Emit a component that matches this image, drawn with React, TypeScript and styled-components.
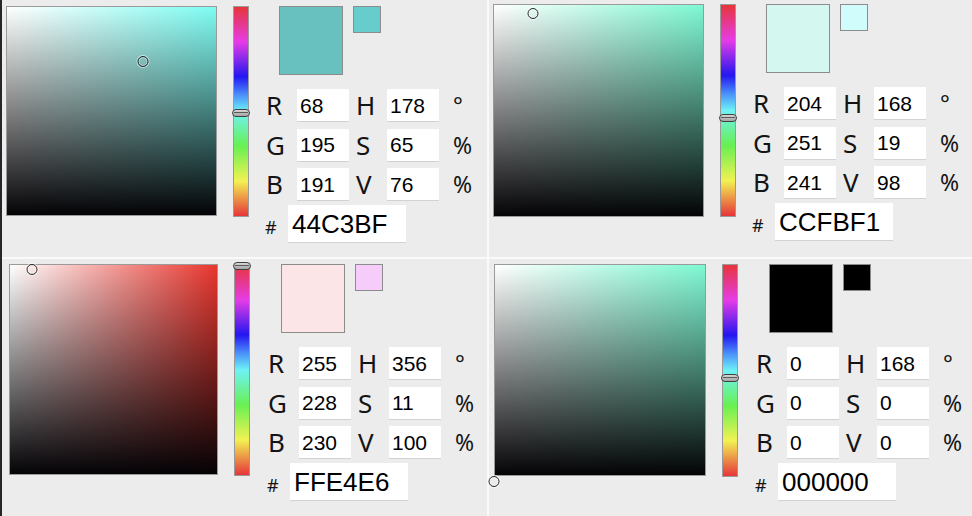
import React from "react";
import styled, { createGlobalStyle } from "styled-components";

const Global = createGlobalStyle`
  html, body { margin: 0; padding: 0; background: #ececec; }
  body { width: 972px; height: 516px; overflow: hidden; }
  * { box-sizing: border-box; }
`;

const Page = styled.div`
  display: grid;
  grid-template-columns: 485px 483px;
  grid-template-rows: 257px 257px;
  gap: 2px;
  width: 972px;
  height: 516px;
  background: #fafafa;
  border-left: 2px solid #262626;
`;

const Panel = styled.div<{ $pt: number; $pl: number }>`
  display: flex;
  align-items: flex-start;
  background: #ececec;
  padding: ${(p) => p.$pt}px 0 0 ${(p) => p.$pl}px;
  font-family: "Noto Sans", "DejaVu Sans", sans-serif;
  color: #1c1c1c;
`;

const Square = styled.div<{ $w: number; $h: number; $pure: string }>`
  position: relative;
  flex: none;
  width: ${(p) => p.$w}px;
  height: ${(p) => p.$h}px;
  border: 1px solid #9a9a9a;
  background: linear-gradient(to bottom, rgba(0, 0, 0, 0) 0%, #040306 100%),
    linear-gradient(to right, #ffffff 0%, ${(p) => p.$pure} 100%);
  margin-right: 16px;
`;

const Marker = styled.div`
  position: absolute;
  width: 11px;
  height: 11px;
  border-radius: 50%;
  border: 1.5px solid #26282a;
  box-shadow: 0 0 0 1px rgba(255, 255, 255, 0.6), inset 0 0 0 1px rgba(255, 255, 255, 0.4);
  transform: translateX(-50%);
`;

const HueBar = styled.div<{ $h: number }>`
  position: relative;
  flex: none;
  width: 16px;
  height: ${(p) => p.$h}px;
  border: 1px solid #9a9a9a;
  background: linear-gradient(
    to bottom,
    #e6353a 0%,
    #e63ce6 16.7%,
    #2416f0 33.3%,
    #4a90fa 42%,
    #6ef2f6 50%,
    #68f052 66.7%,
    #f2f252 83.3%,
    #e6353a 100%
  );
`;

const HueHandle = styled.div`
  position: absolute;
  left: -2px;
  width: 18px;
  height: 8px;
  border-radius: 4px;
  border: 1px solid #404040;
  background: linear-gradient(to bottom, #d6d6d6, #a4a4a4);
  transform: translateY(-50%);
  &::after {
    content: "";
    position: absolute;
    left: 1px;
    right: 1px;
    top: 2px;
    height: 1px;
    background: #5a5a5a;
  }
`;

const RightCol = styled.div<{ $ml: number }>`
  display: flex;
  flex-direction: column;
  margin-left: ${(p) => p.$ml}px;
`;

const Swatches = styled.div`
  display: flex;
  align-items: flex-start;
  gap: 10px;
  padding-left: 14px;
  margin-bottom: 14px;
`;

const Swatch = styled.div<{ $c: string; $w: number; $h: number }>`
  width: ${(p) => p.$w}px;
  height: ${(p) => p.$h}px;
  background: ${(p) => p.$c};
  border: 1px solid #8c8c8c;
`;

const Fields = styled.div`
  display: flex;
  flex-direction: column;
  gap: 6.5px;
`;

const Row = styled.div`
  display: flex;
  align-items: flex-start;
  height: 33px;
`;

const Label = styled.span<{ $w: number; $pl?: number }>`
  width: ${(p) => p.$w}px;
  padding-left: ${(p) => p.$pl ?? 1}px;
  font-size: 26px;
  line-height: 33px;
  color: #141414;
`;

const Unit = styled.span`
  padding-left: 14px;
  font-size: 23px;
  line-height: 33px;
  color: #141414;
`;

const NumInput = styled.input`
  width: 52px;
  height: 33px;
  border: none;
  border-bottom: 1px solid #d2d2d2;
  background: #ffffff;
  padding: 1px 0 0 3px;
  margin: 0;
  outline: none;
  font-family: "Liberation Sans", Arial, sans-serif;
  font-size: 21px;
  color: #000;
`;

const HexRow = styled.div`
  display: flex;
  align-items: flex-start;
  margin-top: -2.5px;
`;

const Hash = styled.span`
  width: 23px;
  padding-top: 3px;
  font-size: 18px;
  line-height: 38px;
  color: #141414;
`;

const HexInput = styled.input`
  width: 118px;
  height: 38px;
  border: none;
  border-bottom: 1px solid #d2d2d2;
  background: #ffffff;
  padding: 1px 0 0 4px;
  margin: 0;
  outline: none;
  font-family: "Liberation Sans", Arial, sans-serif;
  font-size: 26px;
  color: #000;
`;

type Cfg = {
  pad: [number, number];
  sq: [number, number];
  hueH: number;
  gapR: number;
  hue: number;
  s: number;
  v: number;
  rgb: [number, number, number];
  hex: string;
  pure: string;
  big: string;
  small: string;
};

const panels: Cfg[] = [
  { pad: [6, 4], sq: [211, 210], hueH: 211, gapR: 16, hue: 178, s: 65, v: 76, rgb: [68, 195, 191], hex: "44C3BF", pure: "#7efcf2", big: "#69c1bf", small: "#66cccc" },
  { pad: [4, 4], sq: [211, 213], hueH: 213, gapR: 16, hue: 168, s: 19, v: 98, rgb: [204, 251, 241], hex: "CCFBF1", pure: "#7ef8d2", big: "#d4f8ef", small: "#d0fcfc" },
  { pad: [5, 7], sq: [209, 211], hueH: 212, gapR: 17, hue: 356, s: 11, v: 100, rgb: [255, 228, 230], hex: "FFE4E6", pure: "#e8362e", big: "#fbe5e6", small: "#f6ccfa" },
  { pad: [5, 5], sq: [212, 212], hueH: 213, gapR: 17, hue: 168, s: 0, v: 0, rgb: [0, 0, 0], hex: "000000", pure: "#7ef8d2", big: "#000000", small: "#000000" },
];

function Picker({ c }: { c: Cfg }) {
  const [w, h] = c.sq;
  const rows: [string, number, string, number, string][] = [
    ["R", c.rgb[0], "H", c.hue, "°"],
    ["G", c.rgb[1], "S", c.s, "%"],
    ["B", c.rgb[2], "V", c.v, "%"],
  ];
  return (
    <Panel $pt={c.pad[0]} $pl={c.pad[1]}>
      <Square $w={w} $h={h} $pure={c.pure}>
        <Marker style={{ left: (c.s / 100) * w - 1, top: (1 - c.v / 100) * h - 1.5 }} />
      </Square>
      <HueBar $h={c.hueH}>
        <HueHandle style={{ top: (1 - c.hue / 360) * c.hueH - 1 }} />
      </HueBar>
      <RightCol $ml={c.gapR}>
        <Swatches>
          <Swatch $c={c.big} $w={64} $h={69} />
          <Swatch $c={c.small} $w={28} $h={27} />
        </Swatches>
        <Fields>
          {rows.map(([a, av, b, bv, u]) => (
            <Row key={a}>
              <Label $w={32}>{a}</Label>
              <NumInput readOnly value={String(av)} />
              <Label $w={38} $pl={7}>{b}</Label>
              <NumInput readOnly value={String(bv)} />
              <Unit>{u}</Unit>
            </Row>
          ))}
          <HexRow>
            <Hash>#</Hash>
            <HexInput readOnly value={c.hex} />
          </HexRow>
        </Fields>
      </RightCol>
    </Panel>
  );
}

export default function App() {
  return (
    <>
      <Global />
      <Page>
        {panels.map((c) => (
          <Picker key={c.hex} c={c} />
        ))}
      </Page>
    </>
  );
}
